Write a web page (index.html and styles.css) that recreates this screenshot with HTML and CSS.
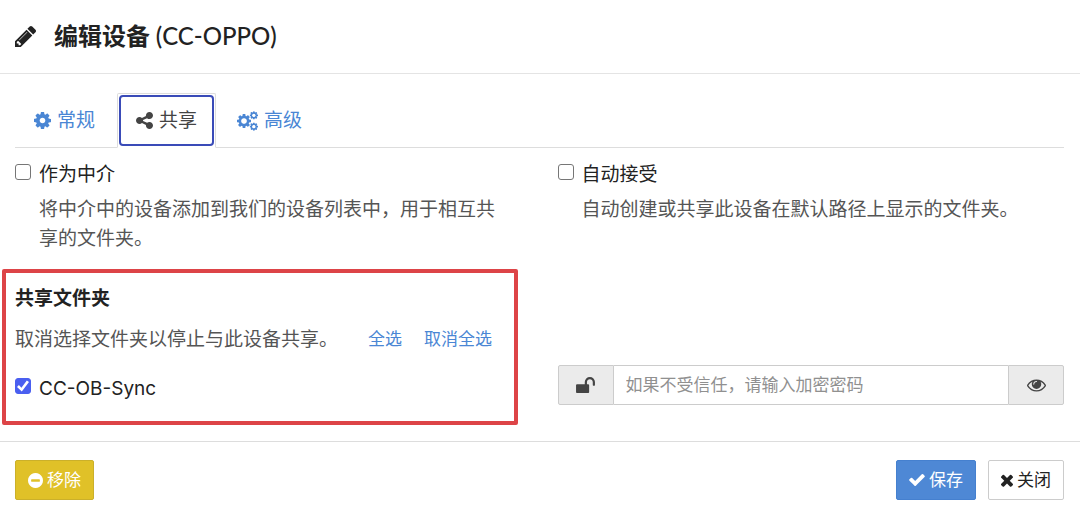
FILE: index.html
```html
<!DOCTYPE html>
<html lang="zh-CN">
<head>
<meta charset="utf-8">
<meta name="viewport" content="width=device-width, initial-scale=1">
<title>编辑设备 (CC-OPPO)</title>
<link rel="stylesheet" href="styles.css">
</head>
<body>
<svg class="sprite" aria-hidden="true">
  <symbol id="cog" viewBox="128 128 1536 1536"><path d="M1152 896q0-106-75-181t-181-75-181 75-75 181 75 181 181 75 181-75 75-181zm512-109v222q0 12-8 23t-20 13l-185 28q-19 54-39 91 35 50 107 138 10 12 10 25t-9 23q-27 37-99 108t-94 71q-12 0-26-9l-138-108q-44 23-91 38-16 136-29 186-7 28-36 28h-222q-14 0-24.500-8.500t-11.500-21.500l-28-184q-49-16-90-37l-141 107q-10 9-25 9-14 0-25-11-126-114-165-168-7-10-7-23 0-12 8-23 15-21 51-66.500t54-70.500q-27-50-41-99l-183-27q-13-2-21-12.500t-8-23.500v-222q0-12 8-23t19-13l186-28q14-46 39-92-40-57-107-138-10-12-10-24 0-10 9-23 26-36 98.500-107.500t94.500-71.500q13 0 26 10l138 107q44-23 91-38 16-136 29-186 7-28 36-28h222q14 0 24.500 8.500t11.500 21.500l28 184q49 16 90 37l142-107q9-9 24-9 13 0 25 10 129 119 165 170 7 8 7 22 0 12-8 23-15 21-51 66.500t-54 70.500q26 50 41 98l183 28q13 2 21 12.500t8 23.500z"/></symbol>
</svg>
<main class="dialog">
  <header class="dialog-header">
    <svg class="icon icon-pencil" viewBox="128 149 1515 1515" aria-hidden="true"><path d="M491 1536l91-91-235-235-91 91v107h128v128h107zm523-928q0-22-22-22-10 0-17 7l-542 542q-7 7-7 17 0 22 22 22 10 0 17-7l542-542q7-7 7-17zm-54-192l416 416-832 832h-416v-416zm683 96q0 53-37 90l-166 166-416-416 166-165q36-38 90-38 53 0 91 38l235 234q37 39 37 91z"/></svg>
    <h1 class="title">编辑设备 <span class="device">(CC-OPPO)</span></h1>
  </header>

  <div class="dialog-body">
    <nav class="tabs">
      <a class="tab" href="#general"><svg class="icon icon-cog" aria-hidden="true"><use href="#cog"/></svg>常规</a>
      <a class="tab active" href="#sharing" aria-current="page"><svg class="icon icon-share" viewBox="128 128 1536 1536" aria-hidden="true"><path d="M1344 1024q133 0 226.500 93.500t93.500 226.500-93.500 226.500-226.500 93.500-226.500-93.500-93.500-226.500q0-12 2-34l-360-180q-92 86-218 86-133 0-226.500-93.500t-93.500-226.500 93.500-226.500 226.500-93.500q126 0 218 86l360-180q-2-22-2-34 0-133 93.500-226.500t226.500-93.500 226.500 93.500 93.500 226.500-93.500 226.500-226.500 93.500q-126 0-218-86l-360 180q2 22 2 34t-2 34l360 180q92-86 218-86z"/></svg>共享</a>
      <a class="tab" href="#advanced"><svg class="icon icon-cogs" viewBox="0 0 1920 1792" aria-hidden="true"><use href="#cog" x="0" y="256" width="1280" height="1280"/><circle class="hole" cx="640" cy="896" r="250"/><use href="#cog" x="1160" y="0" width="760" height="760"/><circle class="hole" cx="1540" cy="380" r="145"/><use href="#cog" x="1160" y="1032" width="760" height="760"/><circle class="hole" cx="1540" cy="1412" r="145"/></svg>高级</a>
    </nav>

    <div class="columns options">
      <div class="option">
        <input class="check" type="checkbox" id="introducer">
        <label class="label" for="introducer">作为中介</label>
        <p class="help">将中介中的设备添加到我们的设备列表中，用于相互共享的文件夹。</p>
      </div>
      <div class="option">
        <input class="check" type="checkbox" id="auto-accept">
        <label class="label" for="auto-accept">自动接受</label>
        <p class="help">自动创建或共享此设备在默认路径上显示的文件夹。</p>
      </div>
    </div>

    <div class="columns">
      <section class="folders">
        <h2 class="folders-title">共享文件夹</h2>
        <div class="folders-hint">
          <p class="hint">取消选择文件夹以停止与此设备共享。</p>
          <a class="link" href="#all">全选</a>
          <a class="link" href="#none">取消全选</a>
        </div>
        <div class="folder">
          <input class="check" type="checkbox" id="folder" checked>
          <label class="label" for="folder">CC-OB-Sync</label>
        </div>
      </section>
      <div class="password">
        <span class="addon"><svg class="icon icon-unlock" viewBox="64 128 1664 1408" aria-hidden="true"><path d="M1728 576v256q0 26-19 45t-45 19h-64q-26 0-45-19t-19-45v-256q0-106-75-181t-181-75-181 75-75 181v192h96q40 0 68 28t28 68v576q0 40-28 68t-68 28h-960q-40 0-68-28t-28-68v-576q0-40 28-68t68-28h672v-192q0-185 131.500-316.500t316.500-131.500 316.500 131.500 131.500 316.500z"/></svg></span>
        <input class="password-input" type="text" aria-label="加密密码" placeholder="如果不受信任，请输入加密密码">
        <button class="addon" type="button" aria-label="显示密码"><svg class="icon icon-eye" viewBox="0 384 1792 1152" aria-hidden="true"><path d="M1664 960q-152-236-381-353 61 104 61 225 0 185-131.500 316.500t-316.500 131.500-316.500-131.500-131.500-316.500q0-121 61-225-229 117-381 353 133 205 333.500 326.500t434.500 121.500 434.500-121.500 333.500-326.500zm-720-384q0-20-14-34t-34-14q-125 0-214.500 89.500t-89.500 214.500q0 20 14 34t34 14 34-14 14-34q0-86 61-147t147-61q20 0 34-14t14-34zm848 384q0 34-20 69-140 230-376.500 368.500t-499.500 138.500-499.500-139-376.500-368q-20-35-20-69t20-69q140-229 376.500-368t499.500-139 499.500 139 376.500 368q20 35 20 69z"/></svg></button>
      </div>
    </div>
  </div>

  <footer class="dialog-footer">
    <button class="button warning" type="button"><svg class="icon icon-minus" viewBox="128 128 1536 1536" aria-hidden="true"><path d="M1344 960v-128q0-26-19-45t-45-19h-768q-26 0-45 19t-19 45v128q0 26 19 45t45 19h768q26 0 45-19t19-45zm320-64q0 209-103 385.500t-279.500 279.500-385.500 103-385.500-103-279.500-279.500-103-385.500 103-385.500 279.500-279.500 385.500-103 385.500 103 279.500 279.500 103 385.500z"/></svg>移除</button>
    <div class="actions">
      <button class="button primary" type="button"><svg class="icon icon-check" viewBox="121 334 1550 1188" aria-hidden="true"><path d="M1671 566q0 40-28 68l-724 724-136 136q-28 28-68 28t-68-28l-136-136-362-362q-28-28-28-68t28-68l136-136q28-28 68-28t68 28l294 295 656-657q28-28 68-28t68 28l136 136q28 28 28 68z"/></svg>保存</button>
      <button class="button" type="button"><svg class="icon icon-times" viewBox="302 302 1188 1252" aria-hidden="true"><path d="M1490 1322q0 40-28 68l-136 136q-28 28-68 28t-68-28l-294-294-294 294q-28 28-68 28t-68-28l-136-136q-28-28-28-68t28-68l294-294-294-294q-28-28-28-68t28-68l136-136q28-28 68-28t68 28l294 294 294-294q28-28 68-28t68 28l136 136q28 28 28 68t-28 68l-294 294 294 294q28 28 28 68z"/></svg>关闭</button>
    </div>
  </footer>
</main>
</body>
</html>
```
FILE: styles.css
```css
* { box-sizing: border-box; }

body {
  margin: 0;
  background: #fff;
  color: #222;
  font: 19px/29px Inter, "Noto Sans CJK SC", sans-serif;
}

h1, h2, p { margin: 0; }
a { color: #4a86d4; text-decoration: none; }

.sprite { position: absolute; width: 0; height: 0; }
.icon { flex: none; fill: currentColor; }
.icon-pencil { width: 21px; height: 21px; }
.icon-cog, .icon-share { width: 17px; height: 17px; }
.icon-cogs { width: 21px; height: 20px; }
.icon-unlock { width: 19px; height: 16px; }
.icon-eye { width: 19px; height: 13px; }
.icon-minus { width: 15px; height: 15px; }
.icon-check { width: 16px; height: 12px; }
.icon-times { width: 12px; height: 13px; }
.hole { fill: #fff; }

.dialog-header {
  display: flex;
  align-items: center;
  gap: 18px;
  padding: 18px 15px;
  border-bottom: 1px solid #e4e4e4;
}
.title { font-size: 24px; line-height: 36px; font-weight: 700; }
.device { font-family: Lato, sans-serif; font-weight: 500; }

.dialog-body { padding: 19px 16px 16px 15px; }

.tabs { display: flex; border-bottom: 1px solid #ddd; }
.tab {
  display: flex;
  align-items: center;
  gap: 6px;
  height: 55px;
  margin-bottom: -1px;
  padding: 0 19px;
}
.tab.active {
  position: relative;
  margin-left: 3px;
  padding: 0 18px;
  border: 1px solid #ddd;
  border-bottom-color: #fff;
  border-radius: 2px 2px 0 0;
  color: #444;
}
.tab.active::after {
  content: "";
  position: absolute;
  inset: 1px;
  border: 2px solid #3a4bb8;
  border-radius: 4px;
}
.tab.active + .tab { margin-left: 2px; }

.columns { display: grid; grid-template-columns: 1fr 1fr; column-gap: 36px; }
.options { padding: 12px 0 16px; }

.option {
  display: grid;
  grid-template-columns: 16px 1fr;
  column-gap: 8px;
  row-gap: 6px;
  align-content: start;
}
.help { grid-column: 2; padding-right: 16px; color: #555; }

.check {
  appearance: none;
  width: 16px;
  height: 16px;
  margin: 4px 0 0;
  border: 1px solid #767676;
  border-radius: 3px;
  background: #fff;
}
.check:checked {
  display: grid;
  place-items: center;
  border-color: #4a5ff0;
  background: #4a5ff0;
}
.check:checked::before {
  content: "";
  width: 12px;
  height: 12px;
  background: #fff;
  clip-path: polygon(0 58%, 16% 42%, 37% 64%, 82% 4%, 100% 17%, 40% 96%);
}

.folders {
  margin: 0 4px 0 -13px;
  padding: 11px 9px 18px;
  border: 4px solid #dd4447;
  border-radius: 2px;
}
.folders-title { font-size: 19px; line-height: 29px; font-weight: 700; }
.folders-hint { display: flex; align-items: center; gap: 22px; margin-top: 12px; }
.hint { margin-right: 8px; color: #555; white-space: nowrap; }
.link { font-size: 17px; white-space: nowrap; }
.folder { display: flex; gap: 8px; margin-top: 20px; }

.password { display: flex; align-self: end; height: 40px; margin-bottom: 20px; }
.addon {
  display: flex;
  align-items: center;
  justify-content: center;
  width: 56px;
  padding: 0;
  border: 1px solid #ccc;
  border-radius: 2px 0 0 2px;
  background: #ebebeb;
  color: #444;
}
.password-input {
  flex: 1;
  min-width: 0;
  padding: 0 12px;
  border: solid #ccc;
  border-width: 1px 0;
  border-radius: 0;
  color: #444;
  font: inherit;
  font-size: 17px;
}
.password-input::placeholder { color: #909090; }
.password-input + .addon { border-radius: 0 2px 2px 0; }

.dialog-footer {
  display: flex;
  justify-content: space-between;
  padding: 18px 16px 18px 15px;
  border-top: 1px solid #ddd;
}
.actions { display: flex; gap: 12px; }
.button {
  display: flex;
  align-items: center;
  gap: 4px;
  height: 40px;
  padding: 0 12px;
  border: 1px solid #ccc;
  border-radius: 2px;
  background: #fff;
  color: #222;
  font: inherit;
  font-size: 17px;
}
.warning { border-color: #cbb02a; background: #e0c128; color: #fff; }
.primary { border-color: #4580cf; background: #4e88d5; color: #fff; }
```
